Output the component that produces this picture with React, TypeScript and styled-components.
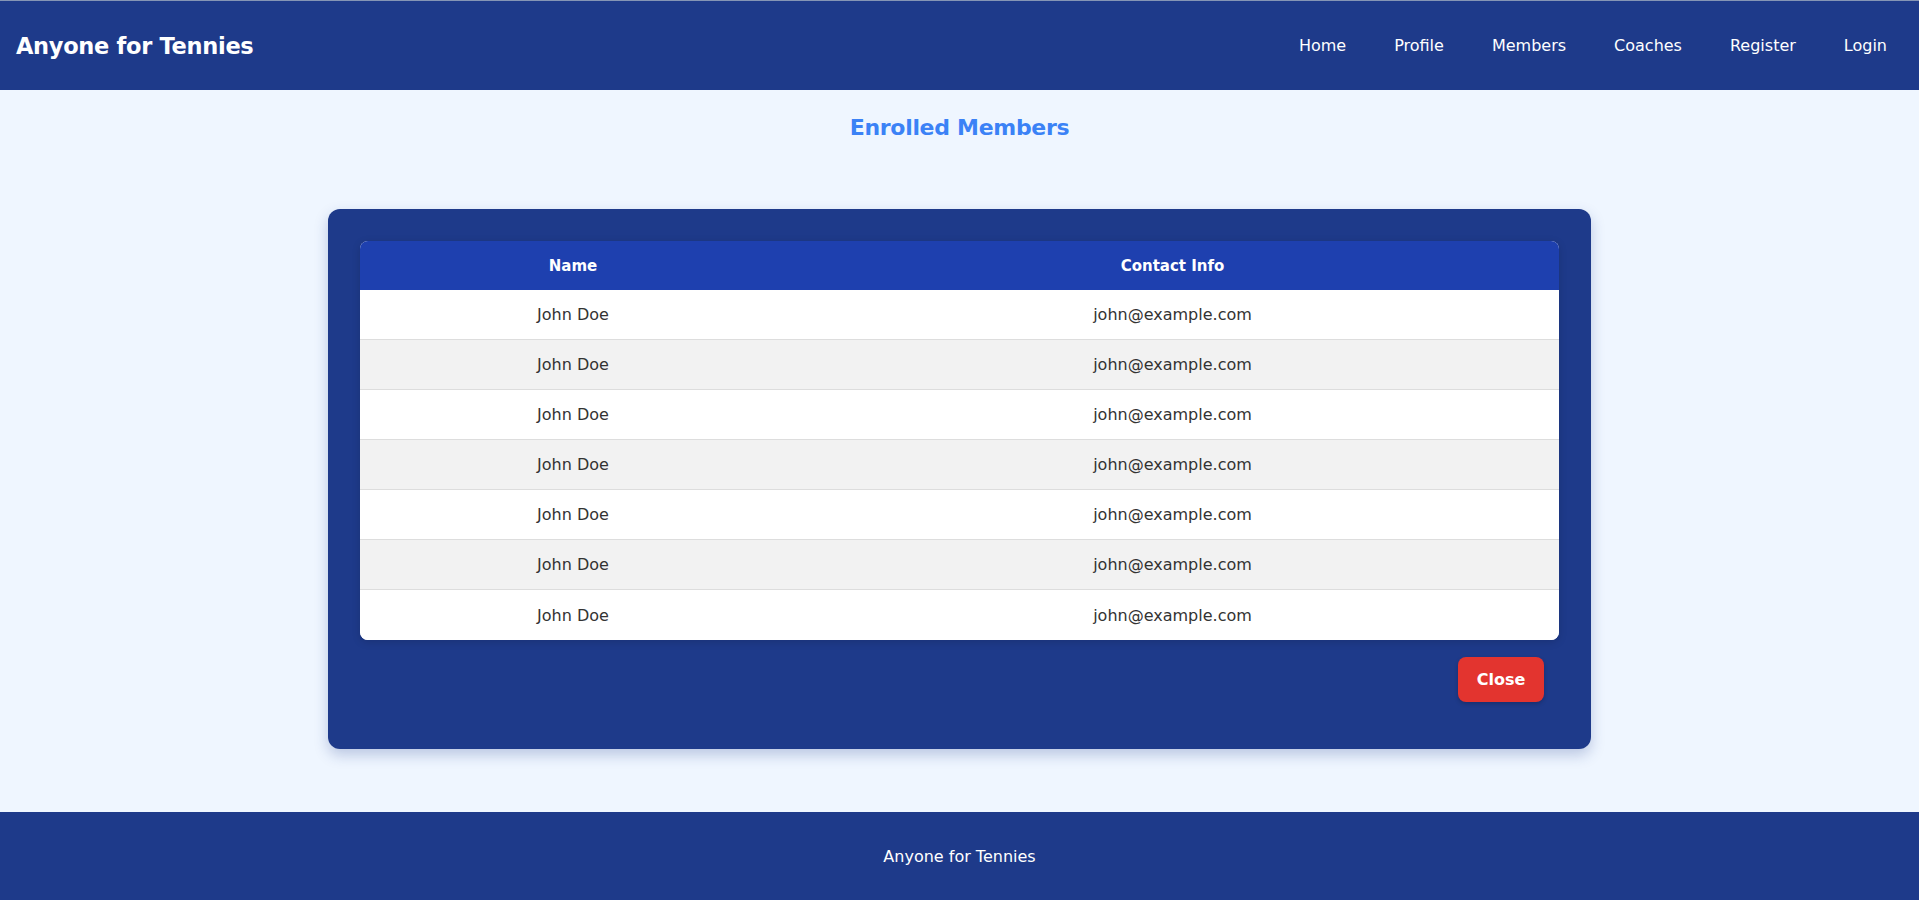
import React from "react";
import styled, { createGlobalStyle } from "styled-components";

const Global = createGlobalStyle`
  * { box-sizing: border-box; }
  html, body { margin: 0; padding: 0; }
  body {
    font-family: "DejaVu Sans", "Open Sans", sans-serif;
    background: #eff6ff;
    color: #333;
  }
`;

const Page = styled.div`
  min-height: 100vh;
  display: flex;
  flex-direction: column;
`;

const Header = styled.header`
  height: 90px;
  background: #1e3a8a;
  border-top: 1px solid #8595b5;
  display: flex;
  align-items: center;
  justify-content: space-between;
  padding: 0 32px 0 16px;
`;

const Brand = styled.div`
  color: #fff;
  font-size: 22.5px;
  font-weight: 700;
  letter-spacing: -0.3px;
`;

const Nav = styled.nav`
  display: flex;
  gap: 48px;
`;

const NavLink = styled.a`
  color: #fff;
  font-size: 16px;
  text-decoration: none;
  cursor: pointer;
`;

const Main = styled.main`
  flex: 1;
  display: flex;
  flex-direction: column;
  align-items: center;
  padding-top: 20px;
`;

const Title = styled.h2`
  margin: 0 0 63px;
  color: #3b82f6;
  font-size: 22px;
  font-weight: 700;
  line-height: 36px;
  letter-spacing: -0.3px;
`;

const Card = styled.section`
  width: 1263px;
  background: #1e3a8a;
  border-radius: 12px;
  padding: 32px;
  box-shadow: 0 6px 14px rgba(30, 58, 138, 0.25);
  display: flex;
  flex-direction: column;
`;

const Table = styled.table`
  width: 100%;
  border-collapse: separate;
  border-spacing: 0;
  background: #fff;
  border-radius: 8px;
  overflow: hidden;
  box-shadow: 0 2px 8px rgba(0, 0, 0, 0.15);
`;

const Th = styled.th<{ $w?: number }>`
  background: #1e40af;
  color: #fff;
  font-size: 15px;
  font-weight: 700;
  height: 49px;
  text-align: center;
  ${(p) => (p.$w ? `width: ${p.$w}px;` : "")}
`;

const Tr = styled.tr<{ $alt: boolean }>`
  background: ${(p) => (p.$alt ? "#f2f2f2" : "#fff")};
`;

const Td = styled.td<{ $last: boolean }>`
  height: 50px;
  text-align: center;
  font-size: 16px;
  color: #333;
  border-bottom: ${(p) => (p.$last ? "none" : "1px solid #dddddd")};
`;

const Actions = styled.div`
  display: flex;
  justify-content: flex-end;
`;

const CloseButton = styled.button`
  margin: 17px 15px 15px 0;
  background: #e3342f;
  color: #fff;
  border: none;
  border-radius: 8px;
  height: 45px;
  width: 86px;
  font-family: inherit;
  font-size: 16px;
  font-weight: 700;
  box-shadow: 0 2px 4px rgba(0, 0, 0, 0.2);
  cursor: pointer;
`;

const Footer = styled.footer`
  height: 88px;
  background: #1e3a8a;
  color: #fff;
  display: flex;
  align-items: center;
  justify-content: center;
  font-size: 16px;
`;

const members = Array.from({ length: 7 }, () => ({
  name: "John Doe",
  email: "john@example.com",
}));

export default function App() {
  return (
    <Page>
      <Global />
      <Header>
        <Brand>Anyone for Tennies</Brand>
        <Nav>
          {["Home", "Profile", "Members", "Coaches", "Register", "Login"].map((l) => (
            <NavLink key={l}>{l}</NavLink>
          ))}
        </Nav>
      </Header>
      <Main>
        <Title>Enrolled Members</Title>
        <Card>
          <Table>
            <thead>
              <tr>
                <Th $w={426}>Name</Th>
                <Th>Contact Info</Th>
              </tr>
            </thead>
            <tbody>
              {members.map((m, i) => (
                <Tr key={i} $alt={i % 2 === 1}>
                  <Td $last={i === members.length - 1}>{m.name}</Td>
                  <Td $last={i === members.length - 1}>{m.email}</Td>
                </Tr>
              ))}
            </tbody>
          </Table>
          <Actions>
            <CloseButton>Close</CloseButton>
          </Actions>
        </Card>
      </Main>
      <Footer>Anyone for Tennies</Footer>
    </Page>
  );
}
